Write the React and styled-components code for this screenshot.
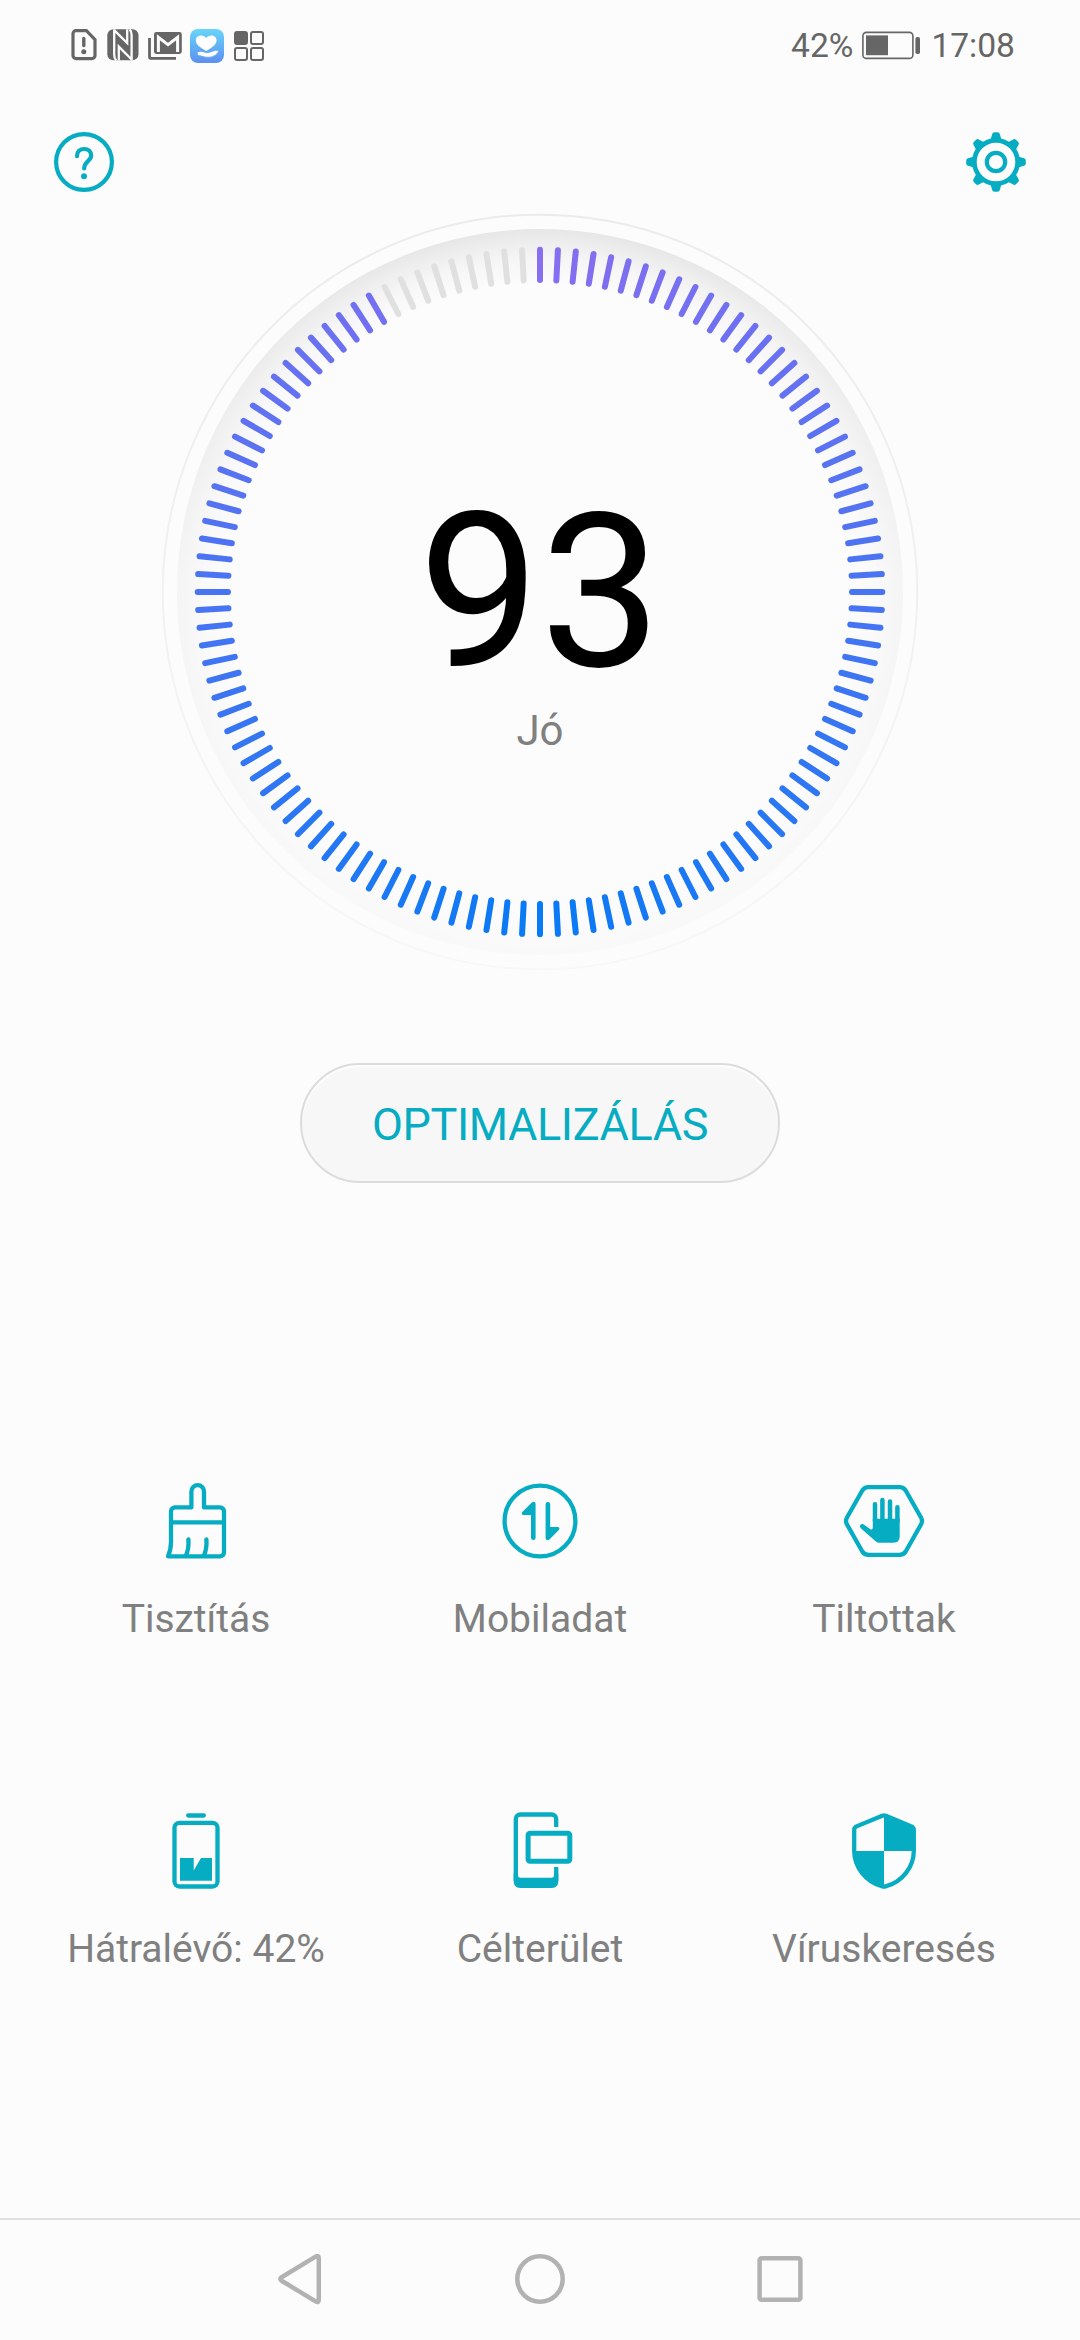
import React from 'react';
import styled, { createGlobalStyle } from 'styled-components';

const teal = '#06acc2';
const paper = '#fcfcfc';
const statusGrey = '#666666';

const TICKS = 120;
const LIT_TICKS = 111;

function FileAlertIcon() {
  return (
    <StatusIcon width="27" height="34" viewBox="0 0 27 34">
      <path d="M5 1.7H15.4L24 10.6V26.6a3 3 0 0 1-3 3H5a3 3 0 0 1-3-3V4.7a3 3 0 0 1 3-3Z" fill="none" stroke={statusGrey} strokeWidth="3.2" />
      <path d="M12.8 9.5V16.5" stroke={statusGrey} strokeWidth="3.4" strokeLinecap="round" />
      <circle cx="12.8" cy="22.8" r="2.5" fill={statusGrey} />
    </StatusIcon>
  );
}

function NfcIcon() {
  return (
    <StatusIcon width="32" height="34" viewBox="0 0 32 34">
      <rect x="0.3" y="0.3" width="31.2" height="31" rx="6" fill={statusGrey} />
      <path d="M7.2 0.3V25.5Q7.2 29.5 9.2 31.5M7.4 1.4L20.2 14V0.3M24.6 31.3V6Q24.6 2 22.6 0.3M24.4 30.2L11.8 17.6V31.3" fill="none" stroke={paper} strokeWidth="2.3" />
    </StatusIcon>
  );
}

function MailIcon() {
  return (
    <StatusIcon width="33" height="34" viewBox="0 0 33 34">
      <path d="M1.5 9V27.4a2 2 0 0 0 2 2H28" fill="none" stroke={statusGrey} strokeWidth="2.8" />
      <rect x="6" y="3" width="27.8" height="22" rx="2.4" fill={statusGrey} />
      <path d="M10.4 23V8.2L20 15.6L29.6 8.2V23" fill="none" stroke={paper} strokeWidth="3" />
    </StatusIcon>
  );
}

function HealthIcon() {
  return (
    <StatusIcon width="35" height="34" viewBox="0 0 35 34">
      <defs>
        <linearGradient id="health" x1="0" y1="0" x2="0" y2="1">
          <stop offset="0" stopColor="#67d5fa" />
          <stop offset="1" stopColor="#5d8ff0" />
        </linearGradient>
      </defs>
      <rect width="34" height="34" rx="8" fill="url(#health)" />
      <path d="M16.2 22C12 19.5 5.8 16 5.8 11.4C5.8 6 13 4.8 16.2 9C19.4 4.8 26.6 6 26.6 11.4C26.6 16 20.4 19.5 16.2 22Z" fill="#fff" />
      <path d="M7 23.5C10 21.5 13 22.6 16.5 23.6C20 24 24 20.5 29 21.4C27 26.5 22 28.8 16 28.2C13 27.8 10.5 26.5 8 26.6Z" fill="#fff" stroke="#61a4f4" strokeWidth="0.8" />
    </StatusIcon>
  );
}

function AppsIcon() {
  return (
    <StatusIcon width="30" height="34" viewBox="0 0 30 34">
      <g fill="none" stroke={statusGrey} strokeWidth="2">
        <rect x="1" y="3" width="12" height="12" rx="2" fill={statusGrey} />
        <rect x="17" y="3" width="12" height="12" rx="2" />
        <rect x="1" y="19" width="12" height="12" rx="2" />
        <rect x="17" y="19" width="12" height="12" rx="2" />
      </g>
    </StatusIcon>
  );
}

function BatteryStatusIcon() {
  return (
    <StatusIcon width="60" height="34" viewBox="0 0 60 34">
      <rect x="0.9" y="3.4" width="50" height="26" rx="3.5" fill="none" stroke={statusGrey} strokeWidth="1.6" />
      <rect x="4" y="6.4" width="22" height="19.8" fill={statusGrey} />
      <rect x="53.4" y="8" width="4.6" height="17" rx="1.8" fill={statusGrey} />
    </StatusIcon>
  );
}

function HelpIcon() {
  return (
    <svg width="60" height="60" viewBox="0 0 60 60" fill="none" stroke={teal}>
      <circle cx="30" cy="30" r="27.9" strokeWidth="4.2" />
      <path d="M23 24.2C23 19.6 26 17 30.2 17C34.4 17 37.2 19.8 37.2 23.6C37.2 28.8 30.2 29.6 30.2 36.4" strokeWidth="4.2" strokeLinecap="round" />
      <circle cx="30" cy="44.2" r="3" fill={teal} stroke="none" />
    </svg>
  );
}

function GearIcon() {
  const teeth = [0, 45, 90, 135, 180, 225, 270, 315];

  return (
    <svg width="60" height="60" viewBox="0 0 60 60" fill="none" stroke={teal}>
      <circle cx="30" cy="30" r="21.6" strokeWidth="4.6" />
      <circle cx="30" cy="30" r="9.2" strokeWidth="4.2" />
      {teeth.map((angle) => (
        <path
          key={angle}
          d="M24 9.5L26.2 2Q26.7 0.2 28.4 0.2H31.6Q33.3 0.2 33.8 2L36 9.5Z"
          transform={`rotate(${angle} 30 30)`}
          fill={teal}
          stroke="none"
        />
      ))}
    </svg>
  );
}

function BrushIcon() {
  return (
    <TileIcon viewBox="0 0 84 84">
      <path d="M37.4 28.4V12.4a6.3 6.3 0 0 1 12.6 0V28.4H66a4 4 0 0 1 4 4V73.3a4 4 0 0 1-4 4H14C16 73 17 68 17 63V32.4a4 4 0 0 1 4-4Z" strokeLinejoin="round" />
      <path d="M17 43.4H70" />
      <path d="M34.4 60.4C34.8 66 34.2 71.5 32 76.5M52.4 60.4C52.8 66 52.2 71.5 50 76.5" strokeLinecap="round" />
    </TileIcon>
  );
}

function DataIcon() {
  return (
    <TileIcon viewBox="0 0 84 84">
      <circle cx="42" cy="42" r="35.4" />
      <ArrowShape />
      <ArrowShape transform="rotate(180 42.6 42)" />
    </TileIcon>
  );
}

function ArrowShape({ transform }) {
  return (
    <path
      d="M33.8 23.6L24.6 32.8C23 34.4 24 36 25.6 36H33V58.8a2.2 2.2 0 0 0 4.6 0V25C37.6 22.8 35.2 22.2 33.8 23.6Z"
      transform={transform}
      fill={teal}
      stroke="none"
    />
  );
}

function BlockedIcon() {
  return (
    <TileIcon viewBox="0 0 84 84">
      <path d="M26.5 8.1H57.5Q61.5 8.1 63.7 11.5L79 38.5Q81 42 79 45.5L63.7 72.5Q61.5 75.9 57.5 75.9H26.5Q22.5 75.9 20.3 72.5L5 45.5Q3 42 5 38.5L20.3 11.5Q22.5 8.1 26.5 8.1Z" />
      <path d="M33 42V25.3M40.4 42V21M48 42V22.4M55.4 42V28.3" strokeLinecap="round" strokeWidth="4.5" />
      <path d="M30.8 39.8H57.7V57.6Q57.7 63.8 51.5 63.8H37.6Q35.4 63.8 33.6 62.2L18.8 49.2C16.8 47.2 18.6 44.4 21.4 45.2L28.4 50.2Q30.8 51 30.8 48.4Z" fill={teal} stroke="none" />
    </TileIcon>
  );
}

function BatteryIcon() {
  return (
    <TileIcon viewBox="0 0 84 84">
      <path d="M34.2 6.5H49.8" strokeLinecap="round" />
      <rect x="20.5" y="13.8" width="43" height="63.7" rx="5" />
      <path d="M26 49H39.7V61.6L47 49H58V71.7H26Z" fill={teal} stroke="none" />
    </TileIcon>
  );
}

function DropZoneIcon() {
  return (
    <TileIcon viewBox="0 0 84 84">
      <path d="M58.2 18V10a4.5 4.5 0 0 0-4.5-4.5H22.3a4.5 4.5 0 0 0-4.5 4.5V72M58.2 58V72" />
      <path d="M15.7 64L20 66.5Q20 68.7 22.3 68.7H53.7Q56 68.7 56 66.5L60.3 64V72.5Q60.3 79 53.8 79H22.2Q15.7 79 15.7 72.5Z" fill={teal} stroke="none" />
      <rect x="30.1" y="24.2" width="41.7" height="28" rx="2" strokeWidth="5" />
    </TileIcon>
  );
}

function ShieldIcon() {
  return (
    <TileIcon viewBox="0 0 84 84">
      <path d="M40.8 6.6Q42 6 43.2 6.6L70 17.6Q71.8 18.6 71.8 21V42C71.8 58 60 73.4 43.6 77.4Q42 77.8 40.4 77.4C24 73.4 12.2 58 12.2 42V21Q12.2 18.6 14 17.6Z" />
      <path d="M42 7L70.5 18.5V42H42ZM42 42H12.5C13 58 24 72 42 77Z" fill={teal} stroke="none" />
    </TileIcon>
  );
}

function ScoreGauge({ score, verdict }) {
  return (
    <Gauge>
      <Dial viewBox="-380 -380 760 760">
        <defs>
          <radialGradient id="rim" gradientUnits="userSpaceOnUse" cx="0" cy="0" r="363">
            <stop offset="0.85" stopColor="#000" stopOpacity="0" />
            <stop offset="0.92" stopColor="#000" stopOpacity="0.03" />
            <stop offset="1" stopColor="#000" stopOpacity="0.088" />
          </radialGradient>
          <linearGradient id="rimFade" x1="0" y1="0" x2="0" y2="1">
            <stop offset="0" stopColor="#fff" />
            <stop offset="0.5" stopColor="#fff" stopOpacity="0.32" />
            <stop offset="1" stopColor="#fff" stopOpacity="0.12" />
          </linearGradient>
          <mask id="rimMask">
            <rect x="-380" y="-380" width="760" height="760" fill="url(#rimFade)" />
          </mask>
          <linearGradient id="halo" x1="0" y1="0" x2="0" y2="1">
            <stop offset="0" stopColor="#ebebeb" />
            <stop offset="1" stopColor="#f7f7f7" />
          </linearGradient>
        </defs>
        <circle r="377.3" fill="none" stroke="url(#halo)" strokeWidth="2" />
        <circle r="363" fill="url(#rim)" mask="url(#rimMask)" />
        {Array.from({ length: TICKS }, (_, i) => (
          <line
            key={i}
            y1="-342.3"
            y2="-312"
            transform={`rotate(${i * 3})`}
            stroke={i < LIT_TICKS ? tickColor(i) : '#e0e0e0'}
            strokeWidth="6"
            strokeLinecap="round"
          />
        ))}
      </Dial>
      <Reading>
        <Score>{score}</Score>
        <Verdict>{verdict}</Verdict>
      </Reading>
    </Gauge>
  );
}

// violet at the top, blue at the bottom, the same on both sides
function tickColor(i) {
  const top = [136, 110, 240];
  const bottom = [8, 122, 245];
  const t = Math.min(i, TICKS - i) / (TICKS / 2);
  const mixed = top.map((c, n) => Math.round(c + (bottom[n] - c) * t));
  return `rgb(${mixed.join(', ')})`;
}

const tools = [
  { label: 'Tisztítás', Icon: BrushIcon },
  { label: 'Mobiladat', Icon: DataIcon },
  { label: 'Tiltottak', Icon: BlockedIcon },
  { label: 'Hátralévő: 42%', Icon: BatteryIcon },
  { label: 'Célterület', Icon: DropZoneIcon },
  { label: 'Víruskeresés', Icon: ShieldIcon },
];

function App() {
  return (
    <Screen>
      <GlobalStyle />
      <StatusBar>
        <Notifications>
          <FileAlertIcon />
          <NfcIcon />
          <MailIcon />
          <HealthIcon />
          <AppsIcon />
        </Notifications>
        <StatusInfo>
          <span>42%</span>
          <BatteryStatusIcon />
          <span>17:08</span>
        </StatusInfo>
      </StatusBar>

      <Header>
        <IconButton aria-label="help"><HelpIcon /></IconButton>
        <IconButton aria-label="settings"><GearIcon /></IconButton>
      </Header>

      <ScoreGauge score="93" verdict="Jó" />

      <OptimizeButton>OPTIMALIZÁLÁS</OptimizeButton>

      <ToolGrid>
        {tools.map(({ label, Icon }) => (
          <Tool key={label}>
            <Icon />
            <ToolLabel>{label}</ToolLabel>
          </Tool>
        ))}
      </ToolGrid>

      <NavBar>
        <NavIcon viewBox="0 0 60 60">
          <path d="M48.8 9.2V50.8Q48.8 54.2 46 52.6L12 32Q8.6 30 12 28L46 7.4Q48.8 5.8 48.8 9.2Z" />
        </NavIcon>
        <NavIcon viewBox="0 0 60 60">
          <circle cx="30" cy="30" r="22.7" />
        </NavIcon>
        <NavIcon viewBox="0 0 60 60">
          <rect x="9.6" y="9.3" width="40.8" height="41.4" rx="2" />
        </NavIcon>
      </NavBar>
    </Screen>
  );
}

export default App;

const GlobalStyle = createGlobalStyle`
  * {
    box-sizing: border-box;
  }

  body {
    margin: 0;
    background: ${paper};
    font-family: Roboto, sans-serif;
  }

  svg {
    display: block;
    flex-shrink: 0;
  }

  button {
    font-family: inherit;
    cursor: pointer;
  }
`;

const Screen = styled.div`
  display: flex;
  flex-direction: column;
  align-items: center;
  width: 1080px;
  height: 2340px;
  background: ${paper};
  overflow: hidden;
`;

const StatusBar = styled.div`
  display: flex;
  justify-content: space-between;
  align-items: center;
  width: 100%;
  height: 92px;
  padding: 0 65px 0 71px;
`;

const StatusIcon = styled.svg`
  overflow: visible;
`;

const Notifications = styled.div`
  display: flex;
  gap: 9px;
`;

const StatusInfo = styled.div`
  display: flex;
  align-items: center;
  gap: 9px;
  color: ${statusGrey};
  font-size: 33.6px;
  line-height: 92px;
`;

const Header = styled.header`
  display: flex;
  justify-content: space-between;
  width: 100%;
  padding: 40px 54px 20px;
`;

const IconButton = styled.button`
  padding: 0;
  border: none;
  background: none;
`;

const Gauge = styled.div`
  display: grid;
  width: 760px;
  height: 760px;
`;

const Dial = styled.svg`
  grid-area: 1 / 1;
  width: 760px;
  height: 760px;
`;

const Reading = styled.div`
  grid-area: 1 / 1;
  display: flex;
  flex-direction: column;
  align-items: center;
  padding-top: 273px;
`;

const Score = styled.div`
  color: #000;
  font-size: 216px;
  line-height: 216px;
`;

const Verdict = styled.div`
  color: #808080;
  font-size: 42px;
  line-height: 60px;
`;

const OptimizeButton = styled.button`
  width: 480px;
  height: 120px;
  margin-top: 91px;
  padding: 3px 0 0;
  border: 2px solid #dcdcdc;
  border-radius: 60px;
  background: #f7f7f7;
  box-shadow: inset 0 2px 2px #fff;
  color: ${teal};
  font-size: 45px;
  letter-spacing: -0.4px;
  line-height: 1;
`;

const ToolGrid = styled.div`
  display: grid;
  grid-template-columns: repeat(3, 344px);
  row-gap: 160px;
  margin-top: 296px;
`;

const Tool = styled.div`
  display: flex;
  flex-direction: column;
  align-items: center;
  gap: 26px;
`;

const TileIcon = styled.svg`
  width: 84px;
  height: 84px;
  fill: none;
  stroke: ${teal};
  stroke-width: 4.3px;
`;

const ToolLabel = styled.span`
  color: #808080;
  font-size: 39px;
  line-height: 60px;
  white-space: nowrap;
`;

const NavBar = styled.nav`
  display: flex;
  justify-content: center;
  align-items: center;
  gap: 180px;
  width: 100%;
  height: 122px;
  margin-top: auto;
  padding-bottom: 2px;
  border-top: 2px solid #e0e0e0;
`;

const NavIcon = styled.svg`
  width: 60px;
  height: 60px;
  fill: none;
  stroke: #b2b2b2;
  stroke-width: 4.5px;
`;
